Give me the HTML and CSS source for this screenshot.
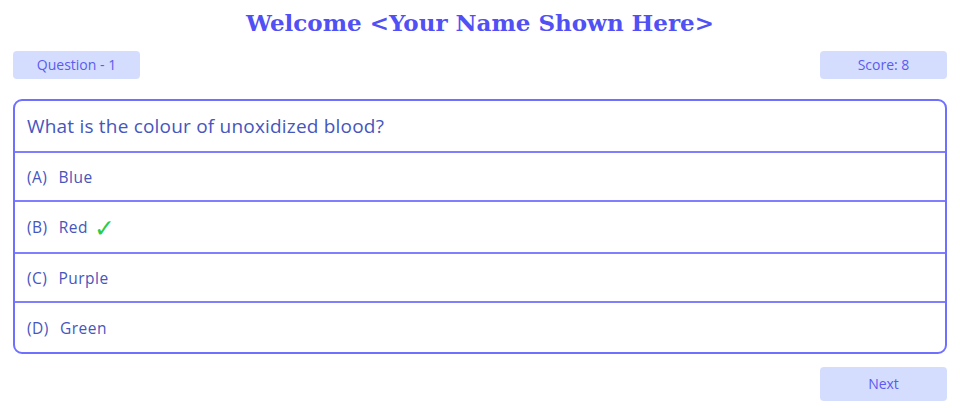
FILE: index.html
```html
<!DOCTYPE html>
<html>
<head>
<meta charset="utf-8">
<link rel="stylesheet" href="styles.css">
</head>
<body>
<div class="page">
  <h1 class="title">Welcome &lt;Your Name Shown Here&gt;</h1>
  <div class="topbar">
    <div class="pill">Question - 1</div>
    <div class="pill">Score: 8</div>
  </div>
  <div class="card">
    <div class="question">What is the colour of unoxidized blood?</div>
    <div class="option"><span class="label">(A)</span>Blue</div>
    <div class="option tall"><span class="label">(B)</span>Red <span class="check">✓</span></div>
    <div class="option"><span class="label">(C)</span>Purple</div>
    <div class="option last"><span class="label">(D)</span>Green</div>
  </div>
  <div class="footer">
    <div class="pill next">Next</div>
  </div>
</div>
</body>
</html>
```
FILE: styles.css
```css
html, body {
  margin: 0;
  padding: 0;
  background: #ffffff;
}
.page {
  padding: 0 13px;
  font-family: "Open Sans", "Noto Sans", sans-serif;
}
.title {
  margin: 0;
  padding-top: 8px;
  height: 43px;
  box-sizing: border-box;
  text-align: center;
  font-family: "DejaVu Serif", serif;
  font-weight: bold;
  font-size: 23px;
  line-height: 30px;
  color: #5050f5;
}
.topbar {
  display: flex;
  justify-content: space-between;
  margin-top: 8px;
}
.pill {
  width: 127px;
  height: 28px;
  box-sizing: border-box;
  background: #d4ddfd;
  border-radius: 4px;
  color: #5b5bf0;
  font-size: 14px;
  line-height: 28px;
  text-align: center;
}
.card {
  margin-top: 20px;
  border: 2px solid #7070ff;
  border-radius: 9px;
  overflow: hidden;
}
.question {
  height: 52px;
  box-sizing: border-box;
  padding: 0 12px;
  display: flex;
  align-items: center;
  font-size: 19px;
  letter-spacing: 0.2px;
  color: #4656bd;
  border-bottom: 2px solid #8080ff;
}
.option {
  height: 49px;
  box-sizing: border-box;
  padding: 0 12px;
  display: flex;
  align-items: center;
  font-size: 15.5px;
  letter-spacing: 0.5px;
  color: #4656bd;
  border-bottom: 2px solid #8080ff;
}
.option.tall {
  height: 52px;
}
.option.last {
  border-bottom: none;
  height: 49px;
}
.label {
  margin-right: 11px;
}
.check {
  color: #2ecc40;
  font-size: 25px;
  margin-left: 6px;
  margin-top: 2px;
  font-family: "DejaVu Sans", sans-serif;
  line-height: 1;
}
.footer {
  display: flex;
  justify-content: flex-end;
  margin-top: 13px;
}
.pill.next {
  height: 34px;
  line-height: 34px;
}
```
